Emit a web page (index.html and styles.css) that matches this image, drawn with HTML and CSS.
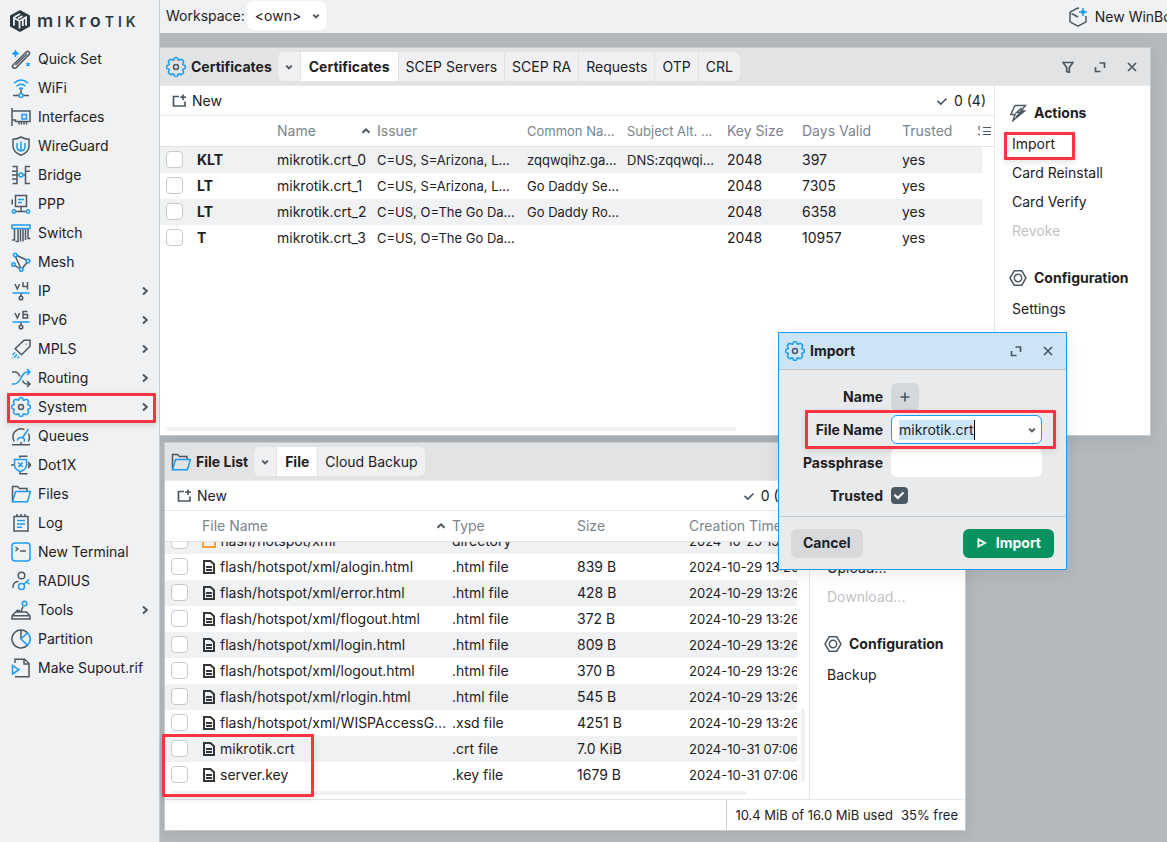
FILE: index.html
```html
<!DOCTYPE html>
<html lang="en">
<head>
  <meta charset="UTF-8" />
  <meta name="viewport" content="width=device-width, initial-scale=1.0" />
  <title>MikroTik WinBox</title>
  <link rel="stylesheet" href="styles.css">
</head>
<body>
  <!-- shared icons -->
  <svg class="sprite" aria-hidden="true">
    <symbol id="i-gear" viewBox="0 0 20 20">
      <path class="b" d="M8.3 1.2 Q10 0 11.7 1.2 L12.2 3 Q12.8 3.6 13.6 3 L15 2.3 Q17.3 2.7 17.7 5 L17 6.4 Q16.4 7.2 17 7.8 L18.8 8.3 Q20 10 18.8 11.7 L17 12.2 Q16.4 12.8 17 13.6 L17.7 15 Q17.3 17.3 15 17.7 L13.6 17 Q12.8 16.4 12.2 17 L11.7 18.8 Q10 20 8.3 18.8 L7.8 17 Q7.2 16.4 6.4 17 L5 17.7 Q2.7 17.3 2.3 15 L3 13.6 Q3.6 12.8 3 12.2 L1.2 11.7 Q0 10 1.2 8.3 L3 7.8 Q3.6 7.2 3 6.4 L2.3 5 Q2.7 2.7 5 2.3 L6.4 3 Q7.2 3.6 7.8 3 Z"/>
      <circle cx="10" cy="10" r="2.5"/>
    </symbol>
    <symbol id="i-folder" viewBox="0 0 20 20">
      <path d="M1.5 17.5V2.5h5l2 2H16v3"/>
      <path class="b" d="M1.5 17.8 4.6 7.6h14.8l-3 10.2z"/>
    </symbol>
    <symbol id="i-right" viewBox="0 0 10 10"><path d="M3 1.500 6.800 5 3 8.500"/></symbol>
    <symbol id="i-down" viewBox="0 0 10 10"><path d="M2.200 3.600 5 6.400l2.800-2.800"/></symbol>
    <symbol id="i-up" viewBox="0 0 10 10"><path d="M1.500 6.800 5 3.300l3.500 3.500"/></symbol>
    <symbol id="i-new" viewBox="0 0 16 16"><path d="M8 3.500H2.500v9.500h11.500V8.500M12 1.500v5.500M9.200 4.200h5.600"/></symbol>
    <symbol id="i-check" viewBox="0 0 12 12"><path d="M1.500 5.800 4.800 9 10.500 3.500"/></symbol>
    <symbol id="i-max" viewBox="0 0 12 12"><path d="M5.500 2h5v5M1.500 6v4.500h5"/></symbol>
    <symbol id="i-close" viewBox="0 0 12 12"><path d="M2 2l8 8M10 2l-8 8"/></symbol>
    <symbol id="i-filter" viewBox="0 0 12 12"><path d="M1 1.500h10L7.300 6.500V11.500L4.700 10.500V6.500z"/></symbol>
    <symbol id="i-nut" viewBox="0 0 18 18"><path d="M5.200 1.800h7.600L17 9l-4.200 7.200H5.200L1 9z"/><circle cx="9" cy="9" r="3.700"/></symbol>
    <symbol id="i-doc" viewBox="0 0 12 14"><path d="M1 1h6.500L11 4.200V13H1zM3 7h6M3 10h6"/></symbol>
  </svg>

  <div class="app">
    <nav class="sidebar">
      <div class="logo">
        <svg class="logo-mark" viewBox="0 0 22 22"><path class="fill" d="M11 0l10 5.500v11L11 22 1 16.500v-11z"/><path class="w" d="M5 15.500V8l5.500 3v7.500M5.500 7 11 4M10.500 11l6.500-3.800v8.300M13.800 9.500v6.500M9 8.500 13.500 6"/></svg>
        <span class="logo-text">m<span>ik</span>ro<span>tik</span></span>
      </div>
      <a href="#"><svg class="ico" viewBox="0 0 20 20"><path d="M2 16 15.500 2.800q1.300-1 2.500.2t.2 2.500L5 18.800q-1.800 1-3-.2t0-2.600zM4.500 16 16 5"/><path class="b" d="M4.500 1v7M1 4.500h7M3 3l3 3M6 3 3 6M15.500 14l3 3M18.500 14l-3 3"/></svg>Quick Set</a>
      <a href="#"><svg class="ico" viewBox="0 0 20 20"><path class="b" d="M3 5.200q7-6.400 14 0M5.500 8.200q4.500-4 9 0M8 10.800q2-1.600 4 0"/><path d="M10 11v4.500M2 17.500h6M12 17.500h6"/><circle class="b" cx="10" cy="17.500" r="2"/></svg>WiFi</a>
      <a href="#"><svg class="ico" viewBox="0 0 20 20"><path d="M1 1v18M1 4h18v10.500H4.500V13H1M8 15v2.500M10.500 15v2.500M13 15v2.500M15.500 15v2.500"/><path class="b" d="M11 7.500h4.500V12H11z"/></svg>Interfaces</a>
      <a href="#"><svg class="ico" viewBox="0 0 20 20"><path d="M10 1q3.500 2 8 2.300V10q0 6-8 9.300Q2 16 2 10V3.300Q6.500 3 10 1z"/><path class="b" d="M10 5.500v10M6 7v3.500q0 4 4 4.500 4-.5 4-4.500V7"/></svg>WireGuard</a>
      <a href="#"><svg class="ico" viewBox="0 0 20 20"><path d="M1.500 1.500h4.500V18.500H1.500M1 6.200h5M1 10h6.500M1 14h5M19 1.500h-4.500V18.500H19M19 6.200h-4.500M12.500 10h2"/><circle class="b" cx="10" cy="10" r="2"/></svg>Bridge</a>
      <a href="#"><svg class="ico" viewBox="0 0 20 20"><path d="M4.500 1.500h11v11h-11zM1.200 5.500v5M10 12.500V17M5 17.500h10"/><path class="b" d="M7 5.500h6M7 8.500h4"/><circle class="b" cx="3" cy="17.500" r="1.700"/><circle class="b" cx="17" cy="17.500" r="1.700"/></svg>PPP</a>
      <a href="#"><svg class="ico" viewBox="0 0 20 20"><path d="M3.500 6v11H1M7 6v12.500H4.500M9.500 6v12.500M12 6v12.500M14.500 6v11M17 6v9.500h2.500"/><path class="b" d="M1 2h18v3.500H1z"/></svg>Switch</a>
      <a href="#"><svg class="ico" viewBox="0 0 20 20"><path d="M4.600 5 9.500 15.500M4 13.500l4.500 3M6 3.500l9.500 4.500M16 10.500l-4.500 5.500"/><circle class="b" cx="4.300" cy="3" r="1.800"/><circle class="b" cx="17" cy="9" r="1.800"/><circle class="b" cx="2.500" cy="12.500" r="1.800"/><circle class="b" cx="10.200" cy="17.500" r="1.800"/></svg>Mesh</a>
      <a href="#"><svg class="ico" viewBox="0 0 20 20"><path d="M4 3l2.300 5L8.600 3M12 1v4.500h4.500M16.500 1v7.500M10 12v3"/><path class="b" d="M1.500 12h17"/><circle cx="10" cy="17" r="1.800"/></svg>IP<svg class="chev"><use href="#i-right"/></svg></a>
      <a href="#"><svg class="ico" viewBox="0 0 20 20"><path d="M4 3l2.300 5L8.600 3M16.500 1.500H12V8h4.500V4.500H12M10 12v3"/><path class="b" d="M1.500 12h17"/><circle cx="10" cy="17" r="1.800"/></svg>IPv6<svg class="chev"><use href="#i-right"/></svg></a>
      <a href="#"><svg class="ico" viewBox="0 0 20 20"><path d="M13 1.200h6v6L10.500 15.800 4.200 9.800z"/><path d="M14.800 5.200h.8"/><path class="b" d="M4 13.500 1.500 16M6 15.500 3 18.800M1 19.300l.5-.5M8 17.500l-1.500 1.700"/></svg>MPLS<svg class="chev"><use href="#i-right"/></svg></a>
      <a href="#"><svg class="ico" viewBox="0 0 20 20"><path d="M1 4h3Q7 4 9 8.500M11.500 12.500Q13 16 16 16h2.500M16 13l3 3-3 3"/><path class="b" d="M1 16h2q4 0 7-6t6-6h2.500M16 1l3 3-3 3"/></svg>Routing<svg class="chev"><use href="#i-right"/></svg></a>
      <a href="#"><svg class="ico"><use href="#i-gear"/></svg>System<svg class="chev"><use href="#i-right"/></svg></a>
      <a href="#"><svg class="ico" viewBox="0 0 20 20"><path d="M3.200 15.500Q.5 10 3.500 6 8 1 13.500 3.500M17.500 7.500q2 4-.3 8M1 18.800h18M10 16v2.500"/><path class="b" d="M17.500 3 11 12.500M6.500 14.500q0-3 3.500-3t3.500 3q0 1-1 1"/></svg>Queues</a>
      <a href="#"><svg class="ico" viewBox="0 0 20 20"><path d="M0 10h3M9 3V1.200h7.500M16.500 18.800H9V17M16.500 10h3M17 7l3 3-3 3"/><path class="b" d="M3.500 4.500h12V10q0 4.500-6 6.500-6-2-6-6.500zM7.300 7.500l4.500 4.500M11.800 7.500 7.300 12"/></svg>Dot1X</a>
      <a href="#"><svg class="ico"><use href="#i-folder"/></svg>Files</a>
      <a href="#"><svg class="ico" viewBox="0 0 20 20"><path d="M3 3.500h14V18H3zM6 1v3M10 1v3M14 1v3"/><path class="b" d="M6 7.500h8M6 11h8M6 14.200h5"/></svg>Log</a>
      <a href="#"><svg class="ico" viewBox="0 0 20 20"><rect class="b" x="1" y="1" width="18" height="18" rx="3"/><path d="M4.500 5 7 7 4.500 9M9 9h6"/></svg>New Terminal</a>
      <a href="#"><svg class="ico" viewBox="0 0 20 20"><circle cx="10.500" cy="4.500" r="3.300"/><path d="M2 17v-1.500q.5-5 5.500-5"/><circle class="b" cx="10.500" cy="15.500" r="3"/><path class="b" d="M12.800 13.500 18 8.200M16 11l2.500 2.200"/></svg>RADIUS</a>
      <a href="#"><svg class="ico" viewBox="0 0 20 20"><path d="M4.500 12h11l3.500 4v3H1v-3zM1 15.800h18M10 12l2-5.500M6 12v-1.500h3"/><circle class="b" cx="13.500" cy="3.500" r="2.300"/></svg>Tools<svg class="chev"><use href="#i-right"/></svg></a>
      <a href="#"><svg class="ico" viewBox="0 0 20 20"><path d="M10 1a9 9 0 1 0 6.300 15.400M10 1v9M10 1q4 0 6.500 2.800"/><path class="b" d="M10 10l6.500-6.200q5.500 6 0 12.600z"/></svg>Partition</a>
      <a href="#"><svg class="ico" viewBox="0 0 20 20"><path d="M4 5V1.200h9.500L18 5.500v13.300H4M13 1.500V6h5"/><path class="b" d="M1.500 7.500v8.500L8 11.700z"/></svg>Make Supout.rif</a>
    </nav>

    <main class="main">
      <header class="topbar">
        <label for="workspace">Workspace:</label>
        <div class="select">
          <select id="workspace"><option>&lt;own&gt;</option></select>
          <svg class="small"><use href="#i-down"/></svg>
        </div>
        <a class="new-winbox" href="#"><svg class="ico" viewBox="0 0 20 20"><path d="M11 1.500 9.500 1 2 5.200v9.600l8 4.300 8-4.300V9M3.500 6.500 10 10"/><path class="b" d="M15 1v8M11 5h8M13.500 3.500l3 3M16.500 3.500l-3 3"/></svg>New WinBox</a>
      </header>

      <div class="desktop">
        <section class="window certs">
          <div class="titlebar">
            <svg class="ico"><use href="#i-gear"/></svg>
            <h2>Certificates</h2>
            <div class="tabs">
              <button class="more" aria-label="Windows"><svg class="small"><use href="#i-down"/></svg></button>
              <button class="active">Certificates</button>
              <button>SCEP Servers</button>
              <button>SCEP RA</button>
              <button>Requests</button>
              <button>OTP</button>
              <button>CRL</button>
            </div>
            <div class="controls">
              <button aria-label="Filter"><svg><use href="#i-filter"/></svg></button>
              <button aria-label="Maximize"><svg><use href="#i-max"/></svg></button>
              <button aria-label="Close"><svg><use href="#i-close"/></svg></button>
            </div>
          </div>
          <div class="content">
            <div class="list">
              <div class="toolbar">
                <button><svg class="new"><use href="#i-new"/></svg>New</button>
                <span class="count"><svg><use href="#i-check"/></svg>0 (4)</span>
              </div>
              <table>
                <thead>
                  <tr><th></th><th></th><th class="sorted">Name<svg class="small"><use href="#i-up"/></svg></th><th>Issuer</th><th class="long">Common Na…</th><th class="long">Subject Alt. …</th><th>Key Size</th><th>Days Valid</th><th>Trusted</th><th class="cut">S</th></tr>
                </thead>
                <tbody>
                  <tr><td><input type="checkbox" aria-label="mikrotik.crt_0"></td><td class="flags">KLT</td><td>mikrotik.crt_0</td><td class="long">C=US, S=Arizona, L…</td><td class="long">zqqwqihz.ga…</td><td class="long">DNS:zqqwqi…</td><td>2048</td><td>397</td><td>yes</td><td></td></tr>
                  <tr><td><input type="checkbox" aria-label="mikrotik.crt_1"></td><td class="flags">LT</td><td>mikrotik.crt_1</td><td class="long">C=US, S=Arizona, L…</td><td class="long">Go Daddy Se…</td><td></td><td>2048</td><td>7305</td><td>yes</td><td></td></tr>
                  <tr><td><input type="checkbox" aria-label="mikrotik.crt_2"></td><td class="flags">LT</td><td>mikrotik.crt_2</td><td class="long">C=US, O=The Go Da…</td><td class="long">Go Daddy Ro…</td><td></td><td>2048</td><td>6358</td><td>yes</td><td></td></tr>
                  <tr><td><input type="checkbox" aria-label="mikrotik.crt_3"></td><td class="flags">T</td><td>mikrotik.crt_3</td><td class="long">C=US, O=The Go Da…</td><td></td><td></td><td>2048</td><td>10957</td><td>yes</td><td></td></tr>
                </tbody>
              </table>
              <button class="columns" aria-label="Columns"></button>
              <div class="hscroll"></div>
            </div>
            <aside>
              <h3><svg viewBox="0 0 18 18"><path d="M6 1.500h10.500L12 7h3.500L4 16.500 6 10.500H1.800zM12.500 4 7.500 8.500h4L7 13"/></svg>Actions</h3>
              <a href="#">Import</a>
              <a href="#">Card Reinstall</a>
              <a href="#">Card Verify</a>
              <a class="off">Revoke</a>
              <h3 class="next"><svg><use href="#i-nut"/></svg>Configuration</h3>
              <a href="#">Settings</a>
            </aside>
          </div>
        </section>

        <section class="window files">
          <div class="titlebar">
            <svg class="ico"><use href="#i-folder"/></svg>
            <h2>File List</h2>
            <div class="tabs">
              <button class="more" aria-label="Windows"><svg class="small"><use href="#i-down"/></svg></button>
              <button class="active">File</button>
              <button>Cloud Backup</button>
            </div>
          </div>
          <div class="content">
            <div class="list">
              <div class="toolbar">
                <button><svg class="new"><use href="#i-new"/></svg>New</button>
                <span class="count"><svg><use href="#i-check"/></svg>0 (24)</span>
              </div>
              <table>
                <thead>
                  <tr><th></th><th class="sorted">File Name<svg class="small"><use href="#i-up"/></svg></th><th>Type</th><th>Size</th><th class="clip">Creation Time</th></tr>
                </thead>
                <tbody>
                  <tr><td><input type="checkbox" aria-label="flash/hotspot/xml"></td><td><svg class="dir" viewBox="0 0 14 14"><path d="M1 13V2h4l2 2h6v9z"/></svg>flash/hotspot/xml</td><td>directory</td><td></td><td class="clip">2024-10-29 13:26</td></tr>
                  <tr><td><input type="checkbox" aria-label="alogin.html"></td><td><svg class="doc"><use href="#i-doc"/></svg>flash/hotspot/xml/alogin.html</td><td>.html file</td><td>839 B</td><td class="clip">2024-10-29 13:26</td></tr>
                  <tr><td><input type="checkbox" aria-label="error.html"></td><td><svg class="doc"><use href="#i-doc"/></svg>flash/hotspot/xml/error.html</td><td>.html file</td><td>428 B</td><td class="clip">2024-10-29 13:26</td></tr>
                  <tr><td><input type="checkbox" aria-label="flogout.html"></td><td><svg class="doc"><use href="#i-doc"/></svg>flash/hotspot/xml/flogout.html</td><td>.html file</td><td>372 B</td><td class="clip">2024-10-29 13:26</td></tr>
                  <tr><td><input type="checkbox" aria-label="login.html"></td><td><svg class="doc"><use href="#i-doc"/></svg>flash/hotspot/xml/login.html</td><td>.html file</td><td>809 B</td><td class="clip">2024-10-29 13:26</td></tr>
                  <tr><td><input type="checkbox" aria-label="logout.html"></td><td><svg class="doc"><use href="#i-doc"/></svg>flash/hotspot/xml/logout.html</td><td>.html file</td><td>370 B</td><td class="clip">2024-10-29 13:26</td></tr>
                  <tr><td><input type="checkbox" aria-label="rlogin.html"></td><td><svg class="doc"><use href="#i-doc"/></svg>flash/hotspot/xml/rlogin.html</td><td>.html file</td><td>545 B</td><td class="clip">2024-10-29 13:26</td></tr>
                  <tr><td><input type="checkbox" aria-label="WISPAccessG"></td><td><svg class="doc"><use href="#i-doc"/></svg>flash/hotspot/xml/WISPAccessG…</td><td>.xsd file</td><td>4251 B</td><td class="clip">2024-10-29 13:26</td></tr>
                  <tr><td><input type="checkbox" aria-label="mikrotik.crt"></td><td><svg class="doc"><use href="#i-doc"/></svg>mikrotik.crt</td><td>.crt file</td><td>7.0 KiB</td><td class="clip">2024-10-31 07:06</td></tr>
                  <tr><td><input type="checkbox" aria-label="server.key"></td><td><svg class="doc"><use href="#i-doc"/></svg>server.key</td><td>.key file</td><td>1679 B</td><td class="clip">2024-10-31 07:06</td></tr>
                </tbody>
              </table>
              <div class="vscroll"></div>
              <div class="hscroll"></div>
            </div>
            <aside>
              <a href="#">Upload...</a>
              <a class="off">Download...</a>
              <h3 class="next"><svg><use href="#i-nut"/></svg>Configuration</h3>
              <a href="#">Backup</a>
            </aside>
          </div>
          <footer class="status">
            <div><span>10.4 MiB of 16.0 MiB used</span><span>35% free</span></div>
          </footer>
        </section>

        <form class="window dialog">
          <div class="titlebar">
            <svg class="ico"><use href="#i-gear"/></svg>
            <h2>Import</h2>
            <div class="controls">
              <button type="button" aria-label="Maximize"><svg><use href="#i-max"/></svg></button>
              <button type="button" aria-label="Close"><svg><use href="#i-close"/></svg></button>
            </div>
          </div>
          <div class="fields">
            <label for="add-name">Name</label>
            <button class="add" id="add-name" type="button" aria-label="Add name"><svg viewBox="0 0 12 12"><path d="M6 1.500v9M1.500 6h9"/></svg></button>
            <label for="file-name">File Name</label>
            <div class="combo">
              <input id="file-name" type="text" value="mikrotik.crt">
              <svg class="small"><use href="#i-down"/></svg>
            </div>
            <label for="passphrase">Passphrase</label>
            <input class="box" id="passphrase" type="password">
            <label for="trusted">Trusted</label>
            <span class="tick"><input id="trusted" type="checkbox" checked><svg><use href="#i-check"/></svg></span>
          </div>
          <div class="buttons">
            <button class="cancel" type="button">Cancel</button>
            <button class="submit" type="button"><svg viewBox="0 0 10 10"><path d="M2 2 7.500 5 2 8z"/></svg>Import</button>
          </div>
        </form>
      </div>
    </main>

    <!-- highlights -->
    <div class="mark mark-system"></div>
    <div class="mark mark-import"></div>
    <div class="mark mark-file"></div>
    <div class="mark mark-certs"></div>
  </div>
</body>
</html>
```

FILE: styles.css
```css
* { box-sizing: border-box; }
body {
  margin: 0;
  font: 14px/20px Inter, "Liberation Sans", sans-serif;
  color: #1e2124;
  overflow: hidden;
}
a { color: inherit; text-decoration: none; }
button, input, select { font: inherit; color: inherit; }
button { border: none; background: none; padding: 0; cursor: pointer; }
h2, h3 { font-size: 14px; font-weight: 700; margin: 0; }

svg { width: 12px; height: 12px; fill: none; stroke: #4d5962; stroke-width: 1.5; flex: none; }
.b { stroke: #1b9cf2; }
.sprite { display: none; }
.ico { width: 20px; height: 20px; }
.small { width: 10px; height: 10px; }

.app { display: flex; height: 100vh; position: relative; overflow: hidden; }

/* sidebar */
.sidebar { width: 160px; flex: none; background: #f0f1f3; border-right: 1px solid #c9cdd0; }
.logo { display: flex; align-items: center; height: 44px; padding: 0 0 2px 9px; gap: 6px; }
.logo-mark { width: 22px; height: 22px; }
.logo-mark .fill { fill: #2d3940; stroke: none; }
.logo-mark .w { stroke: #f0f1f3; stroke-width: 1.8; }
.logo-text { font-size: 18px; font-weight: 600; letter-spacing: 4px; color: #2d3940; }
.logo-text span { font-size: 14px; text-transform: uppercase; }
.sidebar a { display: flex; align-items: center; height: 29px; padding: 0 9px 0 11px; gap: 7px; white-space: nowrap; }
.chev { width: 10px; height: 10px; margin-left: auto; stroke-width: 2; }

/* top bar */
.main { flex: 1; min-width: 0; display: flex; flex-direction: column; }
.topbar { display: flex; align-items: center; height: 33px; background: #f0f1f3; padding: 0 0 2px 6px; gap: 2px; white-space: nowrap; overflow: hidden; }
.select { position: relative; width: 79px; }
.select select { appearance: none; border: none; border-radius: 6px; background: #fff; width: 100%; height: 29px; padding: 0 8px; }
.select svg { position: absolute; right: 5px; top: 10px; stroke-width: 2; }
.new-winbox { display: flex; align-items: center; gap: 7px; margin: 2px -12px 0 auto; }

/* windows */
.desktop { flex: 1; position: relative; background: #b3b9bd; overflow: hidden; }
.window { position: absolute; display: flex; flex-direction: column; background: #fff; box-shadow: 0 4px 16px rgba(0, 0, 0, .08); }
.certs { left: 0; top: 14px; width: 991px; height: 389px; border: 1px solid #c6cacd; border-left: none; }
.files { left: 4px; top: 409px; width: 802px; height: 389px; border: 1px solid #c6cacd; }
.titlebar { display: flex; align-items: center; flex: none; height: 38px; padding: 0 12px 0 6px; gap: 5px; background: #e2e3e5; border-bottom: 1px solid #e9eaeb; }
.tabs { display: flex; height: 29px; margin-left: 1px; border-radius: 6px; background: #f0f0f2; overflow: hidden; }
.tabs button { padding: 0 7px; border-left: 1px solid #e2e3e5; white-space: nowrap; }
.tabs .more { width: 22px; padding: 0; border: none; }
.tabs .more svg, .combo svg { stroke-width: 2; }
.tabs .active { padding: 0 8px; background: #fff; font-weight: 700; }
.controls { display: flex; gap: 20px; margin-left: auto; }
.controls button { height: 12px; line-height: 0; }
.controls svg, .toolbar svg, .add svg { stroke-width: 1.7; }
.content { display: flex; flex: 1; min-height: 0; }
.list { flex: 1; min-width: 0; position: relative; display: flex; flex-direction: column; }
.toolbar { display: flex; align-items: center; justify-content: space-between; height: 30px; flex: none; padding: 0 8px 0 11px; border-bottom: 1px solid #e6e7e9; }
.toolbar button, .count { display: flex; align-items: center; gap: 5px; }
.toolbar .new { width: 16px; height: 16px; }
.count { gap: 6px; white-space: nowrap; }

/* tables */
table, thead, tbody { display: flex; flex-direction: column; }
table { flex: 1; min-height: 0; }
tr { display: grid; align-items: center; height: 26px; }
.certs tr { grid-template-columns: 37px 80px 100px 150px 100px 100px 75px 100px 75px 3px; margin-right: 12px; }
.files tr { grid-template-columns: 37px 250px 125px 112px 1fr; margin-right: 12px; }
thead { border-bottom: 1px solid #e2e4e6; }
thead tr { height: 30px; }
tbody { flex: 1; min-height: 0; overflow: hidden; }
.files tbody { flex: 0 0 246px; justify-content: flex-end; }
.files tbody tr { flex: none; }
th, td { padding: 0 2px 0 0; text-align: left; font-weight: 400; white-space: nowrap; overflow: hidden; text-overflow: ellipsis; }
th { color: #7a858e; }
td:first-child, th:first-child { padding: 0 0 2px 6px; line-height: 0; text-overflow: clip; }
th.clip, td.clip, .cut { text-overflow: clip; padding: 0; }
td.clip, .long { font-size: 13px; }
.sorted { display: flex; align-items: center; justify-content: space-between; padding-right: 6px; }
.sorted svg { stroke-width: 2; }
.certs tbody tr:nth-child(odd), .files tbody tr:nth-child(odd) { background: #f0f1f3; }
.flags { font-weight: 700; }
td input { appearance: none; width: 17px; height: 17px; margin: 0; border: 1px solid #c5cacd; border-radius: 4px; background: #fff; }
.doc { width: 12px; height: 14px; margin: 0 5px 0 1px; vertical-align: -2px; stroke: #33373a; stroke-width: 2; }
.dir { width: 14px; height: 14px; margin-right: 4px; vertical-align: -2px; stroke: #f9a02c; stroke-width: 2; }
.columns { position: absolute; right: 3px; top: 41px; width: 8px; height: 8px; border: solid #4d5962; border-width: 1px 0; }
.columns::after { content: ""; display: block; height: 1px; background: #4d5962; }
.hscroll { flex: none; height: 4px; width: 570px; margin: 0 0 4px 6px; border-radius: 2px; background: #f0f1f2; }
.files .hscroll { width: 576px; }
.vscroll { position: absolute; right: 4px; bottom: 17px; width: 4px; height: 73px; border-radius: 2px; background: #f0f1f2; }

/* side panel */
aside { width: 156px; flex: none; border-left: 1px solid #e6e7e9; padding-top: 10px; }
.files aside { padding-top: 72px; }
aside h3 { display: flex; align-items: center; height: 33px; gap: 7px; padding-left: 14px; }
aside h3 svg { width: 18px; height: 18px; }
aside .next { margin-top: 16px; }
aside a { display: block; line-height: 29px; padding-left: 17px; }
.off { color: #bfc2c5; }

.status { display: flex; justify-content: flex-end; flex: none; height: 31px; border-top: 1px solid #e6e7e9; font-size: 13px; }
.status div { display: flex; align-items: center; gap: 8px; padding: 0 7px 0 8px; border-left: 1px solid #c6cacd; white-space: nowrap; }

/* import dialog */
.dialog { left: 618px; top: 299px; width: 289px; height: 238px; background: #e9eaec; border: 1px solid #1b9cf2; }
.dialog .titlebar { height: 37px; background: #cde3f6; border-color: #bfc6cb; }
.fields { display: grid; grid-template-columns: 104px 151px; column-gap: 8px; row-gap: 4px; align-items: center; padding: 13px 0 6px; }
.fields label { font-weight: 700; text-align: right; }
.add { display: flex; align-items: center; justify-content: center; width: 28px; height: 28px; border-radius: 6px; background: #d5d8da; }
.combo, .box { height: 29px; border-radius: 6px; background: #fff; border: none; width: 100%; }
.combo { display: flex; align-items: center; justify-content: space-between; padding: 0 4px 0 7px; border: 1px solid #1b9cf2; }
.combo input { field-sizing: content; border: none; border-right: 1px solid #000; padding: 0; height: 20px; background: #cce6fa; outline: none; }
.tick { position: relative; height: 29px; display: flex; align-items: center; }
.tick input { appearance: none; width: 17px; height: 17px; margin: 0; border-radius: 4px; background: #4d5962; }
.tick svg { position: absolute; left: 2px; top: 8px; stroke: #fff; stroke-width: 2; pointer-events: none; }
.buttons { display: flex; justify-content: space-between; align-items: center; flex: 1; padding: 0 12px; border-top: 1px solid #c6cacd; }
.buttons button { display: flex; align-items: center; height: 29px; border-radius: 6px; padding: 0 12px; gap: 8px; font-weight: 700; }
.cancel { background: #d8d9db; }
.buttons .submit { background: #07935f; color: #fff; padding: 0 13px; }
.submit svg { stroke: #fff; width: 12px; height: 12px; }

.mark { position: absolute; border: 3px solid #fa3343; border-radius: 1px; box-shadow: 0 2px 6px rgba(0, 0, 0, .12); pointer-events: none; }
.mark-system { left: 7px; top: 393px; width: 149px; height: 30px; }
.mark-import { left: 1004px; top: 132px; width: 71px; height: 28px; }
.mark-file { left: 805px; top: 410px; width: 251px; height: 39px; }
.mark-certs { left: 162px; top: 734px; width: 152px; height: 63px; }
```
